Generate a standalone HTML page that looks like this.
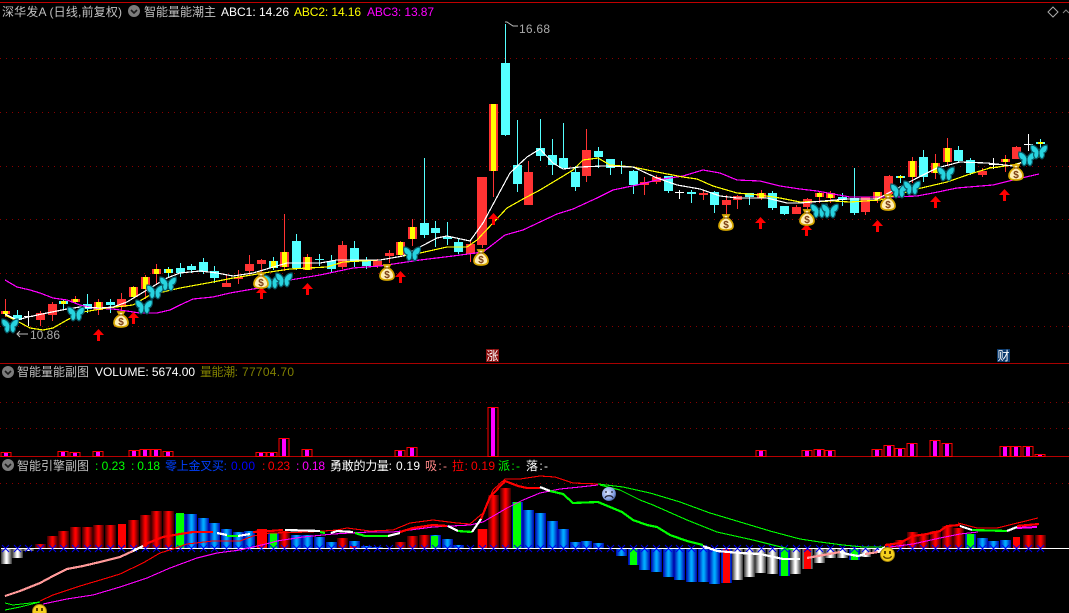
<!DOCTYPE html>
<html><head><meta charset="utf-8"><title>chart</title>
<style>
html,body{margin:0;padding:0;background:#000;width:1069px;height:613px;overflow:hidden}
svg{display:block;position:absolute;left:0;top:0}
text{font-family:"Liberation Sans","WenQuanYi Zen Hei","Noto Sans CJK SC",sans-serif;font-size:12px}
.l{fill:none;shape-rendering:crispEdges;stroke-linejoin:round}
.c{shape-rendering:crispEdges}
</style></head><body>
<svg width="1069" height="613" viewBox="0 0 1069 613" xmlns="http://www.w3.org/2000/svg">
<defs>
<linearGradient id="gr"><stop offset="0" stop-color="#300"/><stop offset=".45" stop-color="#f00"/><stop offset=".55" stop-color="#f00"/><stop offset="1" stop-color="#300"/></linearGradient>
<linearGradient id="gb"><stop offset="0" stop-color="#00a"/><stop offset=".45" stop-color="#0af"/><stop offset=".55" stop-color="#0af"/><stop offset="1" stop-color="#00a"/></linearGradient>
<linearGradient id="gw"><stop offset="0" stop-color="#333"/><stop offset=".45" stop-color="#fff"/><stop offset=".55" stop-color="#fff"/><stop offset="1" stop-color="#333"/></linearGradient>
<radialGradient id="gs" cx=".4" cy=".4" r=".7"><stop offset="0" stop-color="#dde6ff"/><stop offset=".7" stop-color="#7f9be0"/><stop offset="1" stop-color="#23376f"/></radialGradient>
<symbol id="b" viewBox="0 0 18 16" width="18" height="16">
<path d="M9 7C8 4 5 1 1 1 0 4 1 8 4 9 3 11 4 14 6 15 8 14 9 12 9 10 9 12 10 14 12 15 14 14 15 11 14 9 17 8 18 4 17 1 13 1 10 4 9 7z" fill="#28d4e0" stroke="#0a5a66" stroke-width="1.200"/>
<path d="M9 6V12" stroke="#063a44" stroke-width="1"/>
</symbol>
<symbol id="m" viewBox="0 0 16 17" width="16" height="17">
<path d="M5 1h6l-1.500 3C13 6 15 9 15 12c0 3-3 4-7 4s-7-1-7-4c0-3 2-6 5.500-8z" fill="#ffeeb4" stroke="#d8a800" stroke-width="1.700"/>
<path d="M5.500 4h5" stroke="#8a5a10" stroke-width="1.200"/>
<text x="8" y="14" text-anchor="middle" style="font-size:10px;font-weight:bold" fill="#7a3c14">$</text>
</symbol>
<symbol id="a" viewBox="0 0 11 12" width="11" height="12">
<path d="M5.500 0L11 6H7V12H4V6H0z" fill="#f00"/>
</symbol>
<symbol id="v" viewBox="0 0 12 12" width="12" height="12">
<circle cx="6" cy="6" r="6" fill="#7c7c7c"/><path d="M3 5l3 3 3-3" fill="none" stroke="#1a1a1a" stroke-width="1.600"/>
</symbol>
<symbol id="s" viewBox="0 0 15 15" width="15" height="15">
<circle cx="7.500" cy="7.500" r="7" fill="#f5d01e" stroke="#a98708" stroke-width="1"/>
<rect x="4" y="4" width="2" height="3" fill="#5a4000"/><rect x="9" y="4" width="2" height="3" fill="#5a4000"/>
<path d="M3.500 9c1 3 7 3 8 0" fill="none" stroke="#5a4000" stroke-width="1.200"/>
</symbol>
</defs>

<!-- separators -->
<g class="c">
<rect x="0" y="2" width="1069" height="1" fill="#c00000"/>
<rect x="0" y="363" width="1069" height="1" fill="#a80000"/>
<rect x="0" y="456" width="1069" height="1" fill="#b80000"/>
<path d="M0 58.500H1069M0 112.500H1069M0 166.500H1069M0 219.500H1069M0 273.500H1069M0 326.500H1069M0 402.500H1069M0 428.500H1069M0 483.500H1069" stroke="#8a0000" stroke-width="1" stroke-dasharray="1 5" fill="none"/>
</g>

<!-- header texts -->
<text x="2" y="16" fill="#c0c0c0" textLength="120">深华发A (日线,前复权)</text>
<use href="#v" x="128" y="5"/>
<text x="144" y="16" fill="#c0c0c0" textLength="72">智能量能潮主</text>
<text x="221" y="16" fill="#fff" textLength="68">ABC1: 14.26</text>
<text x="294" y="16" fill="#ff0" textLength="67">ABC2: 14.16</text>
<text x="367" y="16" fill="#f0f" textLength="67">ABC3: 13.87</text>
<path d="M1053 7l5 5-5 5-5-5z" fill="none" stroke="#aaa"/>
<path d="M1063 13l3-3 3 3" fill="none" stroke="#888"/>

<!-- candles -->
<path class="c" fill="#f33" d="M5 299h1v18h-1zM1 311h9v3h-9zM40 311h1v15h-1zM36 313h9v7h-9zM52 302h1v19h-1zM48 304h9v11h-9zM75 296h1v8h-1zM71 299h9v3h-9zM98 299h1v16h-1zM94 302h9v8h-9zM121 293h1v17h-1zM117 299h9v8h-9zM133 286h1v11h-1zM129 287h9v10h-9zM145 275h1v24h-1zM141 277h9v12h-9zM156 264h1v20h-1zM152 269h9v5h-9zM226 275h1v12h-1zM222 283h9v4h-9zM238 270h1v14h-1zM234 277h9v2h-9zM249 255h1v21h-1zM245 264h9v7h-9zM261 259h1v13h-1zM257 260h9v4h-9zM284 214h1v57h-1zM280 252h9v15h-9zM307 254h1v16h-1zM303 257h9v13h-9zM342 241h1v28h-1zM338 245h9v22h-9zM377 259h1v9h-1zM373 261h9v5h-9zM389 250h1v13h-1zM385 253h9v3h-9zM400 241h1v15h-1zM396 242h9v13h-9zM412 219h1v27h-1zM408 227h9v12h-9zM470 240h1v22h-1zM466 244h9v10h-9zM482 177h1v71h-1zM477 177h10v68h-10zM493 104h1v93h-1zM489 104h9v67h-9zM528 161h1v44h-1zM524 172h9v33h-9zM586 129h1v53h-1zM582 150h9v26h-9zM644 177h1v18h-1zM640 182h9v3h-9zM656 175h1v9h-1zM652 177h9v5h-9zM703 190h1v10h-1zM699 193h9v2h-9zM726 195h1v19h-1zM722 200h9v5h-9zM737 195h1v14h-1zM733 196h9v4h-9zM761 190h1v10h-1zM757 193h9v5h-9zM796 205h1v9h-1zM792 207h9v7h-9zM807 198h1v11h-1zM803 199h9v8h-9zM819 191h1v12h-1zM815 193h9v4h-9zM830 191h1v12h-1zM826 193h9v5h-9zM865 197h1v18h-1zM861 197h9v15h-9zM877 192h1v11h-1zM873 192h9v7h-9zM889 175h1v19h-1zM884 176h9v18h-9zM912 157h1v26h-1zM908 161h9v16h-9zM935 154h1v25h-1zM931 163h9v10h-9zM947 138h1v27h-1zM943 148h9v14h-9zM982 168h1v9h-1zM978 171h9v4h-9zM1005 155h1v17h-1zM1001 159h9v3h-9zM1016 146h1v13h-1zM1012 147h9v12h-9z"/>
<path class="c" fill="#5ff" d="M17 310h1v12h-1zM13 315h9v5h-9zM63 299h1v10h-1zM59 301h9v3h-9zM87 294h1v19h-1zM83 304h9v5h-9zM110 299h1v14h-1zM106 302h9v3h-9zM168 267h1v10h-1zM164 269h9v4h-9zM180 263h1v14h-1zM176 268h9v5h-9zM191 264h1v9h-1zM187 266h9v4h-9zM203 258h1v16h-1zM199 262h9v10h-9zM214 266h1v17h-1zM210 271h9v7h-9zM273 257h1v13h-1zM269 261h9v7h-9zM296 234h1v36h-1zM292 241h9v27h-9zM319 254h1v12h-1zM315 259h9v1h-9zM331 255h1v17h-1zM327 261h9v8h-9zM354 241h1v26h-1zM350 248h9v14h-9zM366 257h1v12h-1zM362 261h9v5h-9zM424 158h1v80h-1zM420 223h9v12h-9zM435 221h1v26h-1zM431 228h9v5h-9zM447 222h1v23h-1zM443 237h9v2h-9zM458 238h1v16h-1zM454 242h9v10h-9zM505 24h1v112h-1zM501 63h9v72h-9zM517 120h1v72h-1zM513 165h9v19h-9zM540 119h1v42h-1zM536 148h9v8h-9zM552 139h1v36h-1zM548 155h9v10h-9zM563 123h1v45h-1zM559 158h9v10h-9zM575 166h1v25h-1zM571 172h9v15h-9zM598 147h1v21h-1zM594 151h9v6h-9zM610 159h1v16h-1zM606 159h9v9h-9zM621 161h1v13h-1zM633 170h1v24h-1zM629 171h9v14h-9zM668 176h1v17h-1zM664 176h9v15h-9zM691 190h1v13h-1zM687 192h9v2h-9zM714 191h1v22h-1zM710 192h9v13h-9zM749 193h1v12h-1zM745 193h9v4h-9zM772 191h1v19h-1zM768 193h9v15h-9zM784 206h1v9h-1zM780 206h9v8h-9zM842 193h1v13h-1zM838 197h9v3h-9zM854 168h1v47h-1zM850 198h9v15h-9zM900 175h1v8h-1zM896 176h9v2h-9zM923 150h1v32h-1zM919 157h9v20h-9zM958 146h1v17h-1zM954 150h9v11h-9zM970 158h1v17h-1zM966 160h9v13h-9zM1040 139h1v11h-1zM1036 142h9v2h-9z"/>
<path class="c" fill="#fff" d="M28 311h1v15h-1zM24 316h9v1h-9zM679 190h1v9h-1zM675 192h9v1h-9zM993 158h1v11h-1zM989 164h9v1h-9zM1028 134h1v17h-1zM1024 144h9v1h-9z"/>
<path class="c" fill="#ff0" d="M3 311h5v3h-5zM61 301h5v3h-5zM73 299h5v3h-5zM96 302h5v8h-5zM131 287h5v10h-5zM143 277h5v12h-5zM154 269h5v5h-5zM166 269h5v4h-5zM271 261h5v7h-5zM282 252h5v15h-5zM305 257h5v13h-5zM398 242h5v13h-5zM410 227h5v12h-5zM491 104h5v67h-5zM759 193h5v5h-5zM817 193h5v4h-5zM828 193h5v5h-5zM875 192h5v7h-5zM898 176h5v2h-5zM910 161h5v16h-5zM933 163h5v10h-5zM945 148h5v14h-5zM1003 159h5v3h-5zM1038 142h5v2h-5zM989 167h9v1h-9z"/>

<!-- main lines -->
<polyline class="l" stroke="#f0f" stroke-width="1.200" points="5,280 17,287 30,290 40,293 53,298 67,300 80,305 93,308 113,309 140,313 157,313 170,310 180,305 193,299 213,297 230,293 253,289 267,287 290,280 320,275 353,268 380,266 420,260 453,256 483,252 505,235 523,230 540,222 557,214 573,209 597,198 613,190 637,185 657,180 683,176 703,170 720,173 737,180 760,181 780,186 800,189 817,191 850,197 893,197 917,196 933,193 957,188 993,185 1013,180 1039,174"/>
<polyline class="l" stroke="#ff0" stroke-width="1.200" points="5,315 17,321 30,328 43,330 53,328 67,320 83,312 107,308 133,305 150,295 180,288 213,282 233,278 270,272 290,269 327,267 343,262 380,260 403,256 420,253 447,247 467,247 477,240 493,223 507,208 523,199 540,190 560,178 573,170 583,160 598,158 610,165 633,167 657,172 683,177 697,179 713,186 737,193 760,195 780,198 800,202 833,201 850,202 880,200 917,189 947,182 970,174 990,168 1013,165 1039,157"/>
<polyline class="l" stroke="#fff" stroke-width="1.200" points="5,314 17,320 28,317 47,313 67,309 80,307 100,308 113,307 127,302 147,290 167,278 180,273 200,271 217,273 233,276 253,273 270,268 287,263 320,263 337,260 380,260 403,256 420,247 437,238 447,236 470,241 483,223 497,197 510,173 527,157 540,149 553,163 563,169 580,167 603,166 633,167 657,178 677,185 700,189 720,196 737,198 767,198 787,203 800,203 847,199 877,199 900,187 917,178 937,168 960,162 987,163 1013,166 1023,162 1039,153"/>

<!-- annotations -->
<path d="M505 22h2l6 4h5" fill="none" stroke="#bbb"/>
<text x="519" y="33" fill="#aaa" textLength="31">16.68</text>
<path d="M28 334H17m3-3l-3 3 3 3" fill="none" stroke="#bbb"/>
<text x="30" y="339" fill="#aaa" textLength="30">10.86</text>

<!-- arrows -->
<use href="#a" x="93" y="329"/><use href="#a" x="128" y="312"/><use href="#a" x="256" y="287"/><use href="#a" x="302" y="283"/><use href="#a" x="395" y="271"/><use href="#a" x="488" y="213"/><use href="#a" x="755" y="217"/><use href="#a" x="801" y="224"/><use href="#a" x="872" y="220"/><use href="#a" x="930" y="196"/><use href="#a" x="999" y="189"/>

<!-- butterflies -->
<use href="#b" x="1" y="318"/><use href="#b" x="67" y="306"/><use href="#b" x="135" y="299"/><use href="#b" x="146" y="284"/><use href="#b" x="159" y="276"/><use href="#b" x="263" y="274"/><use href="#b" x="275" y="272"/><use href="#b" x="403" y="246"/><use href="#b" x="810" y="203"/><use href="#b" x="821" y="203"/><use href="#b" x="890" y="183"/><use href="#b" x="903" y="180"/><use href="#b" x="937" y="166"/><use href="#b" x="1018" y="151"/><use href="#b" x="1030" y="144"/>

<!-- bags -->
<use href="#m" x="113" y="311"/><use href="#m" x="253" y="272"/><use href="#m" x="379" y="264"/><use href="#m" x="473" y="249"/><use href="#m" x="718" y="214"/><use href="#m" x="799" y="209"/><use href="#m" x="880" y="194"/><use href="#m" x="1008" y="164"/>

<!-- marks -->
<rect x="486" y="349" width="13" height="13" fill="#8a0f0f"/>
<text x="486.500" y="360" fill="#fff">涨</text>
<rect x="997" y="349" width="13" height="13" fill="#0c3a6c"/>
<text x="997.500" y="360" fill="#fff">财</text>

<!-- volume panel -->
<use href="#v" x="2" y="366"/>
<text x="17" y="376" fill="#c0c0c0" textLength="72">智能量能副图</text>
<text x="95" y="376" fill="#fff" textLength="100">VOLUME: 5674.00</text>
<text x="200" y="376" fill="#808000" textLength="38">量能潮:</text>
<text x="242" y="376" fill="#808000" textLength="52">77704.70</text>
<g fill="#f0f" class="c"><path d="M4 452h4v4h-4zM61 451h4v5h-4zM73 452h4v4h-4zM96 451h4v5h-4zM132 450h4v6h-4zM143 449h4v7h-4zM154 449h4v7h-4zM166 451h4v5h-4zM259 452h4v4h-4zM270 452h4v4h-4zM282 438h4v18h-4zM305 449h4v7h-4zM398 450h4v6h-4zM410 447h4v9h-4zM491 407h4v49h-4zM759 450h4v6h-4zM805 450h4v6h-4zM817 449h4v7h-4zM828 450h4v6h-4zM875 449h4v7h-4zM887 445h4v11h-4zM898 448h4v8h-4zM910 443h4v13h-4zM933 440h4v16h-4zM945 443h4v13h-4zM1003 446h4v10h-4zM1014 446h4v10h-4zM1026 446h4v10h-4zM1038 454h4v2h-4z"/></g>
<path class="c" fill="none" stroke="#f00" d="M1 452.500h10v4h-10zM58 451.500h10v5h-10zM70 452.500h10v4h-10zM93 451.500h10v5h-10zM129 450.500h10v6h-10zM140 449.500h10v7h-10zM151 449.500h10v7h-10zM163 451.500h10v5h-10zM256 452.500h10v4h-10zM267 452.500h10v4h-10zM279 438.500h10v18h-10zM302 449.500h10v7h-10zM395 450.500h10v6h-10zM407 447.500h10v9h-10zM488 407.500h10v49h-10zM756 450.500h10v6h-10zM802 450.500h10v6h-10zM814 449.500h10v7h-10zM825 450.500h10v6h-10zM872 449.500h10v7h-10zM884 445.500h10v11h-10zM895 448.500h10v8h-10zM907 443.500h10v13h-10zM930 440.500h10v16h-10zM942 443.500h10v13h-10zM1000 446.500h10v10h-10zM1011 446.500h10v10h-10zM1023 446.500h10v10h-10zM1035 454.500h10v2h-10z"/>

<!-- lower panel -->
<use href="#v" x="2" y="459"/>
<text x="17" y="470" fill="#c0c0c0" textLength="72">智能引擎副图</text>
<text x="95" y="470" fill="#0f0" textLength="30">: 0.23</text>
<text x="131" y="470" fill="#0f0" textLength="29">: 0.18</text>
<text x="165" y="470" fill="#0040ff" textLength="62">零上金叉买:</text>
<text x="231" y="470" fill="#0000ff" textLength="24">0.00</text>
<text x="262" y="470" fill="#f00" textLength="28">: 0.23</text>
<text x="296" y="470" fill="#f0f" textLength="29">: 0.18</text>
<text x="330" y="470" fill="#fff" textLength="62">勇敢的力量:</text>
<text x="396" y="470" fill="#fff" textLength="24">0.19</text>
<text x="425" y="470" fill="#f88" textLength="22">吸:-</text>
<text x="452" y="470" fill="#f00" textLength="16">拉:</text>
<text x="471" y="470" fill="#f00" textLength="24">0.19</text>
<text x="498" y="470" fill="#0f0" textLength="22">派:-</text>
<text x="526" y="470" fill="#fff" textLength="22">落:-</text>

<g class="c">
<g fill="url(#gw)">
<rect x="1" y="548" width="11" height="16"/><rect x="12" y="548" width="11" height="10"/><rect x="23" y="548" width="11" height="3"/><rect x="732" y="548" width="11" height="32"/><rect x="744" y="548" width="11" height="29"/><rect x="755" y="548" width="11" height="25"/><rect x="767" y="548" width="11" height="26"/><rect x="790" y="548" width="11" height="26"/><rect x="802" y="548" width="11" height="21"/><rect x="814" y="548" width="11" height="15"/><rect x="825" y="548" width="11" height="10"/><rect x="837" y="548" width="11" height="10"/><rect x="860" y="548" width="11" height="9"/><rect x="872" y="548" width="11" height="5"/>
</g>
<g fill="url(#gr)">
<rect x="35" y="544" width="11" height="4"/><rect x="47" y="536" width="11" height="12"/><rect x="58" y="531" width="11" height="17"/><rect x="70" y="527" width="11" height="21"/><rect x="82" y="527" width="11" height="21"/><rect x="93" y="525" width="11" height="23"/><rect x="105" y="525" width="11" height="23"/><rect x="128" y="520" width="11" height="28"/><rect x="140" y="515" width="11" height="33"/><rect x="151" y="511" width="11" height="37"/><rect x="163" y="511" width="11" height="37"/><rect x="279" y="531" width="11" height="17"/><rect x="337" y="538" width="11" height="10"/><rect x="395" y="542" width="11" height="6"/><rect x="407" y="536" width="11" height="12"/><rect x="419" y="535" width="11" height="13"/><rect x="477" y="529" width="11" height="19"/><rect x="488" y="495" width="11" height="53"/><rect x="500" y="488" width="11" height="60"/><rect x="884" y="545" width="11" height="3"/><rect x="895" y="540" width="11" height="8"/><rect x="907" y="532" width="11" height="16"/><rect x="918" y="534" width="11" height="14"/><rect x="930" y="531" width="11" height="17"/><rect x="942" y="526" width="11" height="22"/><rect x="953" y="528" width="11" height="20"/><rect x="1023" y="535" width="11" height="13"/><rect x="1035" y="535" width="11" height="13"/>
</g>
<g fill="url(#gb)">
<rect x="175" y="514" width="11" height="34"/><rect x="186" y="514" width="11" height="34"/><rect x="198" y="518" width="11" height="30"/><rect x="209" y="523" width="11" height="25"/><rect x="221" y="529" width="11" height="19"/><rect x="233" y="532" width="11" height="16"/><rect x="244" y="531" width="11" height="17"/><rect x="268" y="533" width="11" height="15"/><rect x="291" y="535" width="11" height="13"/><rect x="302" y="535" width="11" height="13"/><rect x="314" y="537" width="11" height="11"/><rect x="326" y="542" width="11" height="6"/><rect x="349" y="541" width="11" height="7"/><rect x="361" y="546" width="11" height="2"/><rect x="372" y="547" width="11" height="1"/><rect x="430" y="535" width="11" height="13"/><rect x="442" y="539" width="11" height="9"/><rect x="453" y="545" width="11" height="3"/><rect x="512" y="502" width="11" height="46"/><rect x="523" y="510" width="11" height="38"/><rect x="535" y="513" width="11" height="35"/><rect x="547" y="521" width="11" height="27"/><rect x="558" y="529" width="11" height="19"/><rect x="570" y="542" width="11" height="6"/><rect x="581" y="541" width="11" height="7"/><rect x="593" y="543" width="11" height="5"/><rect x="616" y="548" width="11" height="8"/><rect x="628" y="548" width="11" height="17"/><rect x="639" y="548" width="11" height="22"/><rect x="651" y="548" width="11" height="24"/><rect x="663" y="548" width="11" height="29"/><rect x="674" y="548" width="11" height="32"/><rect x="686" y="548" width="11" height="34"/><rect x="698" y="548" width="11" height="34"/><rect x="709" y="548" width="11" height="36"/><rect x="721" y="548" width="11" height="35"/><rect x="779" y="548" width="11" height="28"/><rect x="849" y="548" width="11" height="12"/><rect x="965" y="534" width="11" height="14"/><rect x="977" y="538" width="11" height="10"/><rect x="988" y="541" width="11" height="7"/><rect x="1000" y="540" width="11" height="8"/>
</g>
<path fill="#0f0" d="M176 513h8v35h-8zM270 533h7v15h-7zM431 536h7v12h-7zM513 502h8v46h-8zM630 548h7v17h-7zM781 548h7v28h-7zM851 548h7v12h-7zM967 534h7v14h-7z"/>
<path fill="#f00" d="M257 529h10v19h-10zM118 524h8v24h-8zM350 546h7v2h-7zM478 529h9v19h-9zM723 548h7v35h-7zM804 548h7v21h-7zM1013 537h7v11h-7z"/>
<rect x="1" y="548" width="1068" height="1" fill="#fff"/>
</g>
<path fill="none" stroke="#0000ee" d="M2 545l7 7m0-7l-7 7M14 545l7 7m0-7l-7 7M25 545l7 7m0-7l-7 7M37 545l7 7m0-7l-7 7M49 545l7 7m0-7l-7 7M60 545l7 7m0-7l-7 7M72 545l7 7m0-7l-7 7M84 545l7 7m0-7l-7 7M95 545l7 7m0-7l-7 7M107 545l7 7m0-7l-7 7M118 545l7 7m0-7l-7 7M130 545l7 7m0-7l-7 7M142 545l7 7m0-7l-7 7M153 545l7 7m0-7l-7 7M165 545l7 7m0-7l-7 7M177 545l7 7m0-7l-7 7M188 545l7 7m0-7l-7 7M200 545l7 7m0-7l-7 7M211 545l7 7m0-7l-7 7M223 545l7 7m0-7l-7 7M235 545l7 7m0-7l-7 7M246 545l7 7m0-7l-7 7M258 545l7 7m0-7l-7 7M270 545l7 7m0-7l-7 7M281 545l7 7m0-7l-7 7M293 545l7 7m0-7l-7 7M304 545l7 7m0-7l-7 7M316 545l7 7m0-7l-7 7M328 545l7 7m0-7l-7 7M339 545l7 7m0-7l-7 7M351 545l7 7m0-7l-7 7M363 545l7 7m0-7l-7 7M374 545l7 7m0-7l-7 7M386 545l7 7m0-7l-7 7M397 545l7 7m0-7l-7 7M409 545l7 7m0-7l-7 7M421 545l7 7m0-7l-7 7M432 545l7 7m0-7l-7 7M444 545l7 7m0-7l-7 7M455 545l7 7m0-7l-7 7M467 545l7 7m0-7l-7 7M479 545l7 7m0-7l-7 7M490 545l7 7m0-7l-7 7M502 545l7 7m0-7l-7 7M514 545l7 7m0-7l-7 7M525 545l7 7m0-7l-7 7M537 545l7 7m0-7l-7 7M549 545l7 7m0-7l-7 7M560 545l7 7m0-7l-7 7M572 545l7 7m0-7l-7 7M583 545l7 7m0-7l-7 7M595 545l7 7m0-7l-7 7M607 545l7 7m0-7l-7 7M618 545l7 7m0-7l-7 7M630 545l7 7m0-7l-7 7M641 545l7 7m0-7l-7 7M653 545l7 7m0-7l-7 7M665 545l7 7m0-7l-7 7M676 545l7 7m0-7l-7 7M688 545l7 7m0-7l-7 7M700 545l7 7m0-7l-7 7M711 545l7 7m0-7l-7 7M723 545l7 7m0-7l-7 7M734 545l7 7m0-7l-7 7M746 545l7 7m0-7l-7 7M758 545l7 7m0-7l-7 7M769 545l7 7m0-7l-7 7M781 545l7 7m0-7l-7 7M793 545l7 7m0-7l-7 7M804 545l7 7m0-7l-7 7M816 545l7 7m0-7l-7 7M827 545l7 7m0-7l-7 7M839 545l7 7m0-7l-7 7M851 545l7 7m0-7l-7 7M862 545l7 7m0-7l-7 7M874 545l7 7m0-7l-7 7M886 545l7 7m0-7l-7 7M897 545l7 7m0-7l-7 7M909 545l7 7m0-7l-7 7M920 545l7 7m0-7l-7 7M932 545l7 7m0-7l-7 7M944 545l7 7m0-7l-7 7M955 545l7 7m0-7l-7 7M967 545l7 7m0-7l-7 7M979 545l7 7m0-7l-7 7M990 545l7 7m0-7l-7 7M1002 545l7 7m0-7l-7 7M1013 545l7 7m0-7l-7 7M1025 545l7 7m0-7l-7 7M1037 545l7 7m0-7l-7 7"/>

<!-- lower thin lines -->
<polyline class="l" stroke="#0f0" points="5,603 13,605 40,602"/>
<polyline class="l" stroke="#0f0" points="5,610 20,607 40,602"/>
<polyline class="l" stroke="#f00" stroke-width="1.100" points="40,601 53,595 80,586 107,578 120,574 143,563 160,553 173,549 187,544 213,541 240,541 253,536 270,533 310,532 337,530 347,528 370,531 393,530 410,523 433,520 457,523 470,524 483,513 493,490 505,479 520,479 540,476 555,477 573,483 598,484"/>
<polyline class="l" stroke="#f0f" stroke-width="1.100" points="43,604 67,599 93,595 120,587 147,578 170,568 197,558 217,553 240,550 270,543 277,541 303,537 333,534 350,533 370,532 393,532 410,530 433,527 470,525 483,522 507,508 523,500 540,493 560,489 580,487 598,485"/>
<polyline class="l" stroke="#f0f" stroke-width="1.100" points="890,547 913,544 940,538 960,534 978,532"/>
<polyline class="l" stroke="#f0f" stroke-width="2" points="1017,528 1037,527"/>
<polyline class="l" stroke="#0f0" stroke-width="1.100" points="598,484 623,487 650,493 680,502 710,513 740,522 770,531 800,539 820,542 843,545 863,547 883,547"/>
<polyline class="l" stroke="#0f0" stroke-width="1.100" points="600,485 620,490 640,500 653,505 687,520 717,532 753,540 773,545 793,550"/>
<polyline class="l" stroke="#f00" stroke-width="1.100" points="958,523 977,528 997,528 1038,518"/>

<!-- thick segmented line -->
<g class="l" stroke-width="2.200">
<polyline stroke="#f99" points="5,596 20,591 40,583 53,576 67,569 83,566 100,562 120,557 133,551"/>
<polyline stroke="#fff" points="133,551 143,546"/>
<polyline stroke="#f00" points="143,546 148,543 163,537 180,534 193,532 213,532"/>
<polyline stroke="#fff" points="217,533 227,535"/>
<polyline stroke="#0f0" points="227,536 238,536"/>
<polyline stroke="#fff" points="238,536 250,534"/>
<polyline stroke="#f00" points="253,532 270,531 283,530"/>
<polyline stroke="#fff" points="285,530 320,531"/>
<polyline stroke="#0f0" points="320,532 325,533"/>
<polyline stroke="#fff" points="331,533 337,531 353,532"/>
<polyline stroke="#0f0" points="355,533 365,536 388,536"/>
<polyline stroke="#fff" points="388,536 400,533"/>
<polyline stroke="#f00" points="400,532 413,528 433,525 447,526"/>
<polyline stroke="#fff" points="448,526 458,531"/>
<polyline stroke="#0f0" points="458,531 472,532"/>
<polyline stroke="#fff" points="472,532 481,519"/>
<polyline stroke="#f00" points="481,519 490,497 505,481 518,486 527,488 540,488"/>
<polyline stroke="#fff" points="540,487 550,491"/>
<polyline stroke="#0f0" points="550,491 563,494 573,503 598,502 610,507 622,512 633,520 647,525 657,527 670,535 687,541 703,545"/>
<polyline stroke="#fff" points="703,546 717,551 740,553 760,554 783,559 800,559"/>
<polyline stroke="#f99" points="807,558 840,552"/>
<polyline stroke="#fff" points="840,552 847,554 858,556 865,554"/>
<polyline stroke="#f99" points="865,554 878,552"/>
<polyline stroke="#fff" points="878,552 885,547"/>
<polyline stroke="#f00" points="885,545 900,543 913,536 927,534 940,531 947,526 960,525"/>
<polyline stroke="#fff" points="960,526 972,530"/>
<polyline stroke="#0f0" points="972,530 1007,531"/>
<polyline stroke="#fff" points="1007,531 1017,527"/>
<polyline stroke="#f00" points="1017,526 1039,524"/>
</g>

<!-- faces -->
<use href="#s" x="32" y="604"/>
<use href="#s" x="880" y="547"/>
<circle cx="609" cy="494" r="7" fill="url(#gs)"/>
<path d="M606 491v2M612 491v2M605 498c1-3 7-3 8 0" fill="none" stroke="#223" stroke-width="1.200"/>
</svg>
</body></html>
